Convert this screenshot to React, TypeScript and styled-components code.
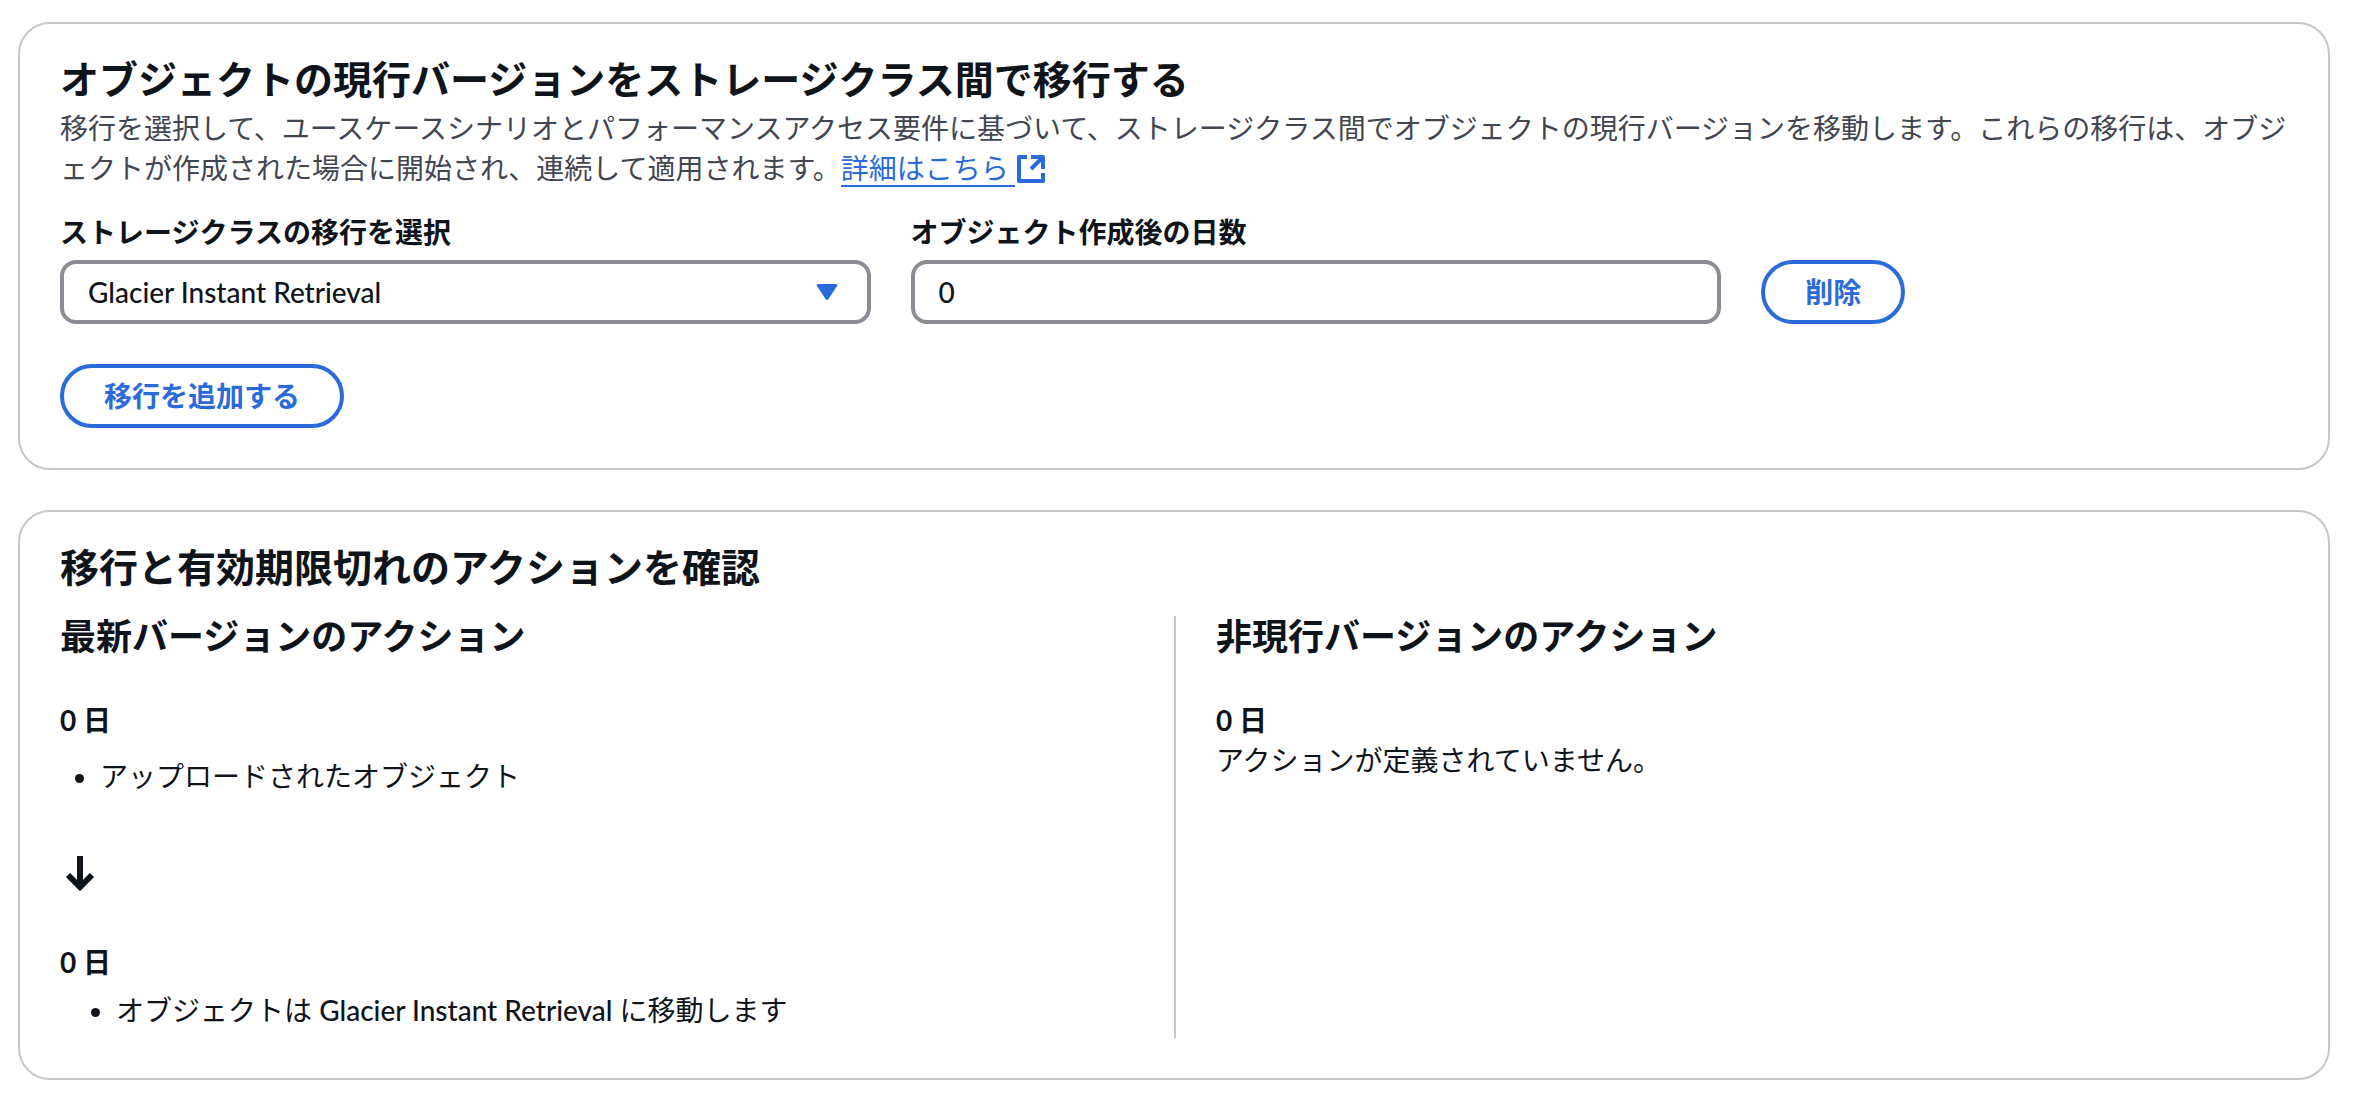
import React from "react";
import styled, { createGlobalStyle } from "styled-components";

const color = {
  text: "#0f141a",
  secondary: "#424650",
  blue: "#2a6adb",
  border: "#c6c6cd",
  field: "#8c8c94",
};

const GlobalStyle = createGlobalStyle`
  * { box-sizing: border-box; }
  body {
    margin: 0;
    background: #fff;
    color: ${color.text};
    font-family: Lato, "Noto Sans CJK JP", sans-serif;
    font-size: 28px;
    line-height: 40px;
  }
`;

const Page = styled.main`
  display: flex;
  flex-direction: column;
  gap: 40px;
  padding: 22px 24px 24px 18px;
`;

const Panel = styled.section`
  border: 2px solid ${color.border};
  border-radius: 32px;
  padding: 26px 40px 40px;
`;

const Title = styled.h2`
  margin: 0;
  font-size: 39px;
  line-height: 58px;
  font-weight: 700;
`;

const Subtitle = styled.h3`
  margin: 0;
  font-size: 36px;
  line-height: 40px;
  font-weight: 700;
`;

const Description = styled.p`
  margin: 0 -16px 0 0;
  color: ${color.secondary};
`;

const Link = styled.a`
  color: ${color.blue};
  text-decoration: none;
  white-space: nowrap;
`;

const LinkText = styled.span`
  border-bottom: 2px solid ${color.blue};
  padding-right: 6px;
`;

const LinkIcon = styled.svg`
  width: 32px;
  height: 32px;
  vertical-align: -6px;
`;

const FieldRow = styled.form`
  display: grid;
  grid-template-columns: 20fr 20fr 13fr;
  column-gap: 40px;
  align-items: end;
  margin-top: 24px;
`;

const Field = styled.div`
  display: flex;
  flex-direction: column;
  gap: 8px;
`;

const Label = styled.label`
  font-weight: 700;
`;

const SelectWrap = styled.div`
  position: relative;
  display: flex;
`;

const Caret = styled.svg`
  position: absolute;
  right: 28px;
  top: 16px;
  width: 32px;
  height: 32px;
  fill: ${color.blue};
  pointer-events: none;
`;

const controlStyle = `
  appearance: none;
  width: 100%;
  height: 64px;
  border: 4px solid ${color.field};
  border-radius: 16px;
  padding: 0 24px;
  background: #fff;
  color: ${color.text};
  font: inherit;
  font-weight: 500;
`;

const Select = styled.select`${controlStyle}`;
const Input = styled.input`${controlStyle}`;

const Button = styled.button`
  justify-self: start;
  height: 64px;
  border: 4px solid ${color.blue};
  border-radius: 32px;
  padding: 0 40px;
  background: #fff;
  color: ${color.blue};
  font: inherit;
  font-weight: 700;
`;

const Footer = styled.div`
  display: flex;
  margin-top: 40px;
`;

const Columns = styled.div`
  display: grid;
  grid-template-columns: 1fr 1fr;
  margin-top: 20px;
`;

const Column = styled.div<{ $divided?: boolean }>`
  min-height: 422px;
  ${(p) => p.$divided && `border-left: 2px solid ${color.border}; padding-left: 40px;`}
`;

const Day = styled.div<{ $first?: boolean }>`
  margin-top: ${(p) => (p.$first ? 44 : 48)}px;
  font-weight: 700;
`;

const List = styled.ul<{ $indent: number; $gap: number }>`
  margin: ${(p) => p.$gap}px 0 0;
  padding-left: ${(p) => p.$indent}px;
`;

const ClassName = styled.span`
  font-weight: 500;
`;

const Arrow = styled.svg`
  display: block;
  width: 40px;
  height: 40px;
  margin-top: 58px;
  fill: none;
  stroke: ${color.text};
  stroke-width: 6;
`;

export default function App() {
  return (
    <>
      <GlobalStyle />
      <Page lang="ja">
        <Panel>
          <Title>オブジェクトの現行バージョンをストレージクラス間で移行する</Title>
          <Description>
            移行を選択して、ユースケースシナリオとパフォーマンスアクセス要件に基づいて、ストレージクラス間でオブジェクトの現行バージョンを移動します。これらの移行は、オブジェクトが作成された場合に開始され、連続して適用されます。
            <Link href="#">
              <LinkText>詳細はこちら</LinkText>
              <LinkIcon viewBox="0 0 32 32" fill="none" stroke={color.blue} strokeWidth="4" strokeLinejoin="round">
                <path d="M12 4H4v24h24v-8M16 4h12v12M28 4L16 16" />
              </LinkIcon>
            </Link>
          </Description>
          <FieldRow onSubmit={(e) => e.preventDefault()}>
            <Field>
              <Label htmlFor="storage-class">ストレージクラスの移行を選択</Label>
              <SelectWrap>
                <Select id="storage-class">
                  <option>Glacier Instant Retrieval</option>
                </Select>
                <Caret viewBox="0 0 32 32">
                  <path d="M7 8h18q2 0 1 2l-8.500 13q-1.500 2-3 0L6 10q-1-2 1-2z" />
                </Caret>
              </SelectWrap>
            </Field>
            <Field>
              <Label htmlFor="days">オブジェクト作成後の日数</Label>
              <Input id="days" inputMode="numeric" defaultValue="0" />
            </Field>
            <Button type="button">削除</Button>
          </FieldRow>
          <Footer>
            <Button type="button">移行を追加する</Button>
          </Footer>
        </Panel>
        <Panel>
          <Title>移行と有効期限切れのアクションを確認</Title>
          <Columns>
            <Column>
              <Subtitle>最新バージョンのアクション</Subtitle>
              <Day $first>0 日</Day>
              <List $indent={40} $gap={16}>
                <li>アップロードされたオブジェクト</li>
              </List>
              <Arrow viewBox="0 0 40 40">
                <path d="M20 2v30M8 21l12 12 12-12" />
              </Arrow>
              <Day>0 日</Day>
              <List $indent={56} $gap={8}>
                <li>
                  オブジェクトは <ClassName>Glacier Instant Retrieval</ClassName> に移動します
                </li>
              </List>
            </Column>
            <Column $divided>
              <Subtitle>非現行バージョンのアクション</Subtitle>
              <Day $first>0 日</Day>
              <div>アクションが定義されていません。</div>
            </Column>
          </Columns>
        </Panel>
      </Page>
    </>
  );
}
